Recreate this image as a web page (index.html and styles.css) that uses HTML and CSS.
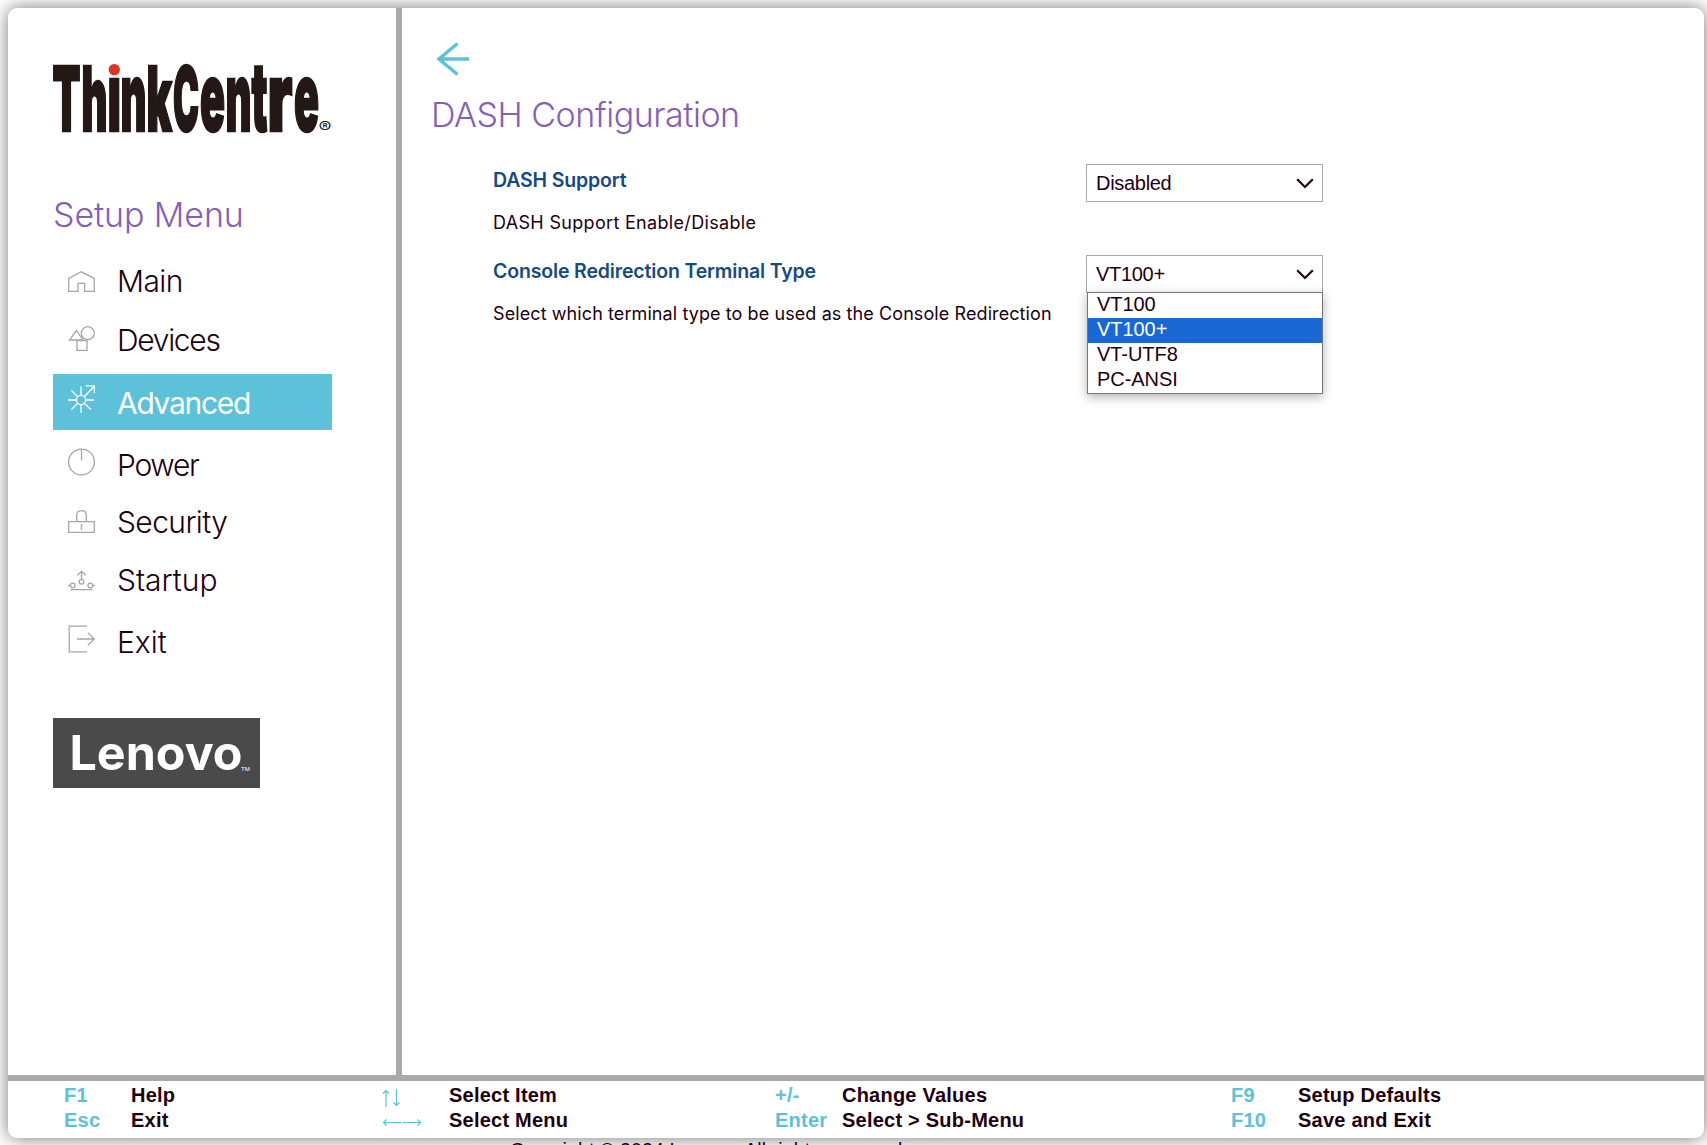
FILE: index.html
```html
<!DOCTYPE html>
<html lang="en">
<head>
<meta charset="utf-8">
<title>ThinkCentre Setup</title>
<link rel="stylesheet" href="styles.css">
</head>
<body>
<div class="panel">
  <div class="upper">
    <aside class="sidebar">
      <svg class="brand" width="280" height="70" viewBox="0 0 280 70">
        <text class="brand-text" y="67"><tspan x="-.5" textLength="28" lengthAdjust="spacingAndGlyphs">T</tspan><tspan x="28.500" textLength="26" lengthAdjust="spacingAndGlyphs">h</tspan><tspan class="low" x="54.500" textLength="13.500" lengthAdjust="spacingAndGlyphs">i</tspan><tspan class="low" x="67.500" textLength="26" lengthAdjust="spacingAndGlyphs">n</tspan><tspan x="93.500" textLength="25.500" lengthAdjust="spacingAndGlyphs">k</tspan><tspan x="120" textLength="26" lengthAdjust="spacingAndGlyphs">C</tspan><tspan class="low" x="147" textLength="25" lengthAdjust="spacingAndGlyphs">e</tspan><tspan class="low" x="172.500" textLength="26" lengthAdjust="spacingAndGlyphs">n</tspan><tspan class="low" x="198.500" textLength="16" lengthAdjust="spacingAndGlyphs">t</tspan><tspan class="low" x="214.500" textLength="25" lengthAdjust="spacingAndGlyphs">r</tspan><tspan class="low" x="241" textLength="25" lengthAdjust="spacingAndGlyphs">e</tspan></text>
        <rect x="54.500" y="-14" width="13" height="27" fill="#fff"/>
        <circle cx="61.3" cy="5.6" r="5.7" fill="#da3527"/>
        <text class="reg" x="265.5" y="69" textLength="13" lengthAdjust="spacingAndGlyphs">®</text>
      </svg>
      <h2 class="menu-title">Setup Menu</h2>
      <ul class="menu">
        <li class="item"><svg width="28" height="21" viewBox="0 0 28 21"><path d="M.7 20.3V7.5L13.3.8 26.3 7.5v12.8h-9.6v-8H10v8z"/></svg><span class="label snug">Main</span></li>
        <li class="item"><svg width="28" height="25" viewBox="0 0 28 25"><path d="M8.5 4.5 1.5 14H15zM9 14.7h10v9.6H9z"/><circle cx="19.8" cy="7.2" r="6.5"/></svg><span class="label tight">Devices</span></li>
        <li class="item active"><svg width="28" height="28" viewBox="0 0 28 28"><circle cx="13" cy="15" r="4.6"/><path d="M13 1.5v9M13 19.6V28M0 15h8.4M17.6 15H26M3.5 5.5l6.2 6.2M16.3 11.7 26 1.5M3.5 24.5l6.2-6.2M16.3 18.3l6.5 6.2M17.5.8h8.8v7.5"/></svg><span class="label tight">Advanced</span></li>
        <li class="item"><svg width="28" height="28" viewBox="0 0 28 28"><circle cx="13.5" cy="14" r="12.9"/><path d="M13.5 1v11.5"/></svg><span class="label tight">Power</span></li>
        <li class="item"><svg width="28" height="23" viewBox="0 0 28 23"><path d="M.7 11.7h25.6v10.6H.7zM8.7 11.7V5.5Q8.7.7 13.5.7t4.8 4.8v6.2M13.5 14v6"/></svg><span class="label snug">Security</span></li>
        <li class="item"><svg width="28" height="24" viewBox="0 0 28 24"><path d="M2.5 22.6h22M13.5 12.3V4.5M9.3 8.3l4.2-4 4.2 4M0 18.5h2.2M24.8 18.5H27"/><circle cx="13.5" cy="14.7" r="2.3"/><circle cx="4.7" cy="18.5" r="2.3"/><circle cx="22.3" cy="18.5" r="2.3"/></svg><span class="label">Startup</span></li>
        <li class="item"><svg width="28" height="28" viewBox="0 0 28 28"><path d="M19 1.2H1.2v25.6H19M9 14h17M19.8 7.6l6.5 6.4-6.5 6.4"/></svg><span class="label">Exit</span></li>
      </ul>
      <svg class="lenovo" width="207" height="70" viewBox="0 0 207 70">
        <rect width="207" height="70" fill="#4a4a4a"/>
        <text class="lenovo-text" x="16.500" y="52" textLength="173" lengthAdjust="spacingAndGlyphs">Lenovo</text>
        <text class="tm" x="188" y="53" textLength="9" lengthAdjust="spacingAndGlyphs">TM</text>
      </svg>
    </aside>
    <main class="content">
      <svg class="back" width="34" height="34" viewBox="0 0 34 34"><path d="M2.5 17H33M21.5 1.5 3 17l18.500 15.500"/></svg>
      <h1 class="title">DASH Configuration</h1>
      <div class="options">
        <section class="option">
          <div><h3 class="name">DASH Support</h3><p class="desc wide">DASH Support Enable/Disable</p></div>
          <div class="select"><span>Disabled</span><svg width="18" height="11" viewBox="0 0 18 11"><path d="M1.200 1.200 9 9l7.800-7.800"/></svg></div>
        </section>
        <section class="option">
          <div><h3 class="name">Console Redirection Terminal Type</h3><p class="desc">Select which terminal type to be used as the Console Redirection</p></div>
          <div class="select"><span>VT100+</span><svg width="18" height="11" viewBox="0 0 18 11"><path d="M1.200 1.200 9 9l7.800-7.800"/></svg>
            <ul class="list"><li>VT100</li><li class="chosen">VT100+</li><li>VT-UTF8</li><li>PC-ANSI</li></ul>
          </div>
        </section>
      </div>
    </main>
  </div>
  <footer class="keys">
    <dl><dt>F1</dt><dd>Help</dd><dt>Esc</dt><dd>Exit</dd></dl>
    <dl><dt><svg width="20" height="18" viewBox="0 0 20 18"><path d="M4 18V1.500M1 4.500l3-3 3 3M14.500 0v16.500M11.500 13.500l3 3 3-3"/></svg></dt><dd>Select Item</dd><dt><svg class="across" width="40" height="9" viewBox="0 0 40 9"><path d="M19 4.500H1.500M4.500 1.500l-3 3 3 3M21 4.500h17.500M35.500 1.500l3 3-3 3"/></svg></dt><dd>Select Menu</dd></dl>
    <dl><dt>+/-</dt><dd>Change Values</dd><dt>Enter</dt><dd>Select &gt; Sub-Menu</dd></dl>
    <dl><dt>F9</dt><dd>Setup Defaults</dd><dt>F10</dt><dd>Save and Exit</dd></dl>
  </footer>
</div>
<p class="copyright">Copyright © 2024 Lenovo. All rights reserved.</p>
</body>
</html>
```
FILE: styles.css
```css
* { box-sizing: border-box; }
html, body { height: 100%; overflow: hidden; }
body {
  margin: 0;
  background: #fff;
  color: #1c0010;
  font-family: Inter, "Noto Sans", sans-serif;
}
h1, h2, h3, p, ul, dl, dd { margin: 0; padding: 0; }
ul { list-style: none; }

.panel {
  display: flex;
  flex-direction: column;
  width: 1696px;
  height: 1130px;
  margin: 8px 0 0 8px;
  background: #fff;
  border-radius: 9px;
  box-shadow: 0 0 18px rgba(0, 0, 0, .55);
}
.upper { display: flex; flex: 1; }

.sidebar {
  width: 394px;
  padding: 56px 0 0 45px;
  border-right: 6px solid #a9a9a9;
}
.brand { display: block; overflow: visible; }
.brand-text {
  font-size: 90px;
  font-weight: 900;
  fill: #231815;
  stroke: #231815;
  stroke-width: 2.5;
}
.low { font-size: 96px; }
.reg { font-size: 16px; fill: #231815; }
.menu-title {
  margin-top: 61px;
  color: #8460b8;
  font-size: 34px;
  font-weight: 350;
  line-height: 40px;
  letter-spacing: -.1px;
}
.menu {
  display: flex;
  flex-direction: column;
  gap: 6px;
  margin-top: 25px;
}
.item {
  display: flex;
  align-items: baseline;
  gap: 21px;
  width: 279px;
  padding: 11px 0 17px 15px;
}
.item svg {
  fill: none;
  stroke: #a6a6a6;
  stroke-width: 1.3;
}
.label { font-size: 30px; font-weight: 350; line-height: 21px; }
.snug { letter-spacing: -.6px; }
.tight { letter-spacing: -1.3px; }
.active { margin-bottom: 1px; background: #5ec1da; color: #fff; }
.active .label { font-weight: 400; transform: translateY(1px); }
.active svg { stroke: #fff; }
.lenovo { display: block; margin-top: 48px; }
.lenovo-text { font-size: 48px; font-weight: 750; fill: #fff; }
.tm { font: 5.500px "Liberation Sans", sans-serif; fill: #fff; }

.content { flex: 1; padding: 34px 0 0 29px; }
.back { display: block; margin-left: 5px; fill: none; stroke: #5ec1da; stroke-width: 3.500; }
.title {
  margin-top: 19px;
  color: #8460b8;
  font-size: 34px;
  font-weight: 300;
  line-height: 40px;
  letter-spacing: -.45px;
}
.options { width: 892px; margin-top: 29px; padding-left: 62px; }
.option { display: flex; justify-content: space-between; height: 91px; }
.name { color: #164a82; font-size: 19.500px; font-weight: 600; line-height: 32px; letter-spacing: -.15px; }
.desc { margin-top: 12px; font-size: 18px; line-height: 30px; letter-spacing: .09px; white-space: nowrap; }
.wide { letter-spacing: .32px; }
.select {
  position: relative;
  display: flex;
  align-items: center;
  justify-content: space-between;
  width: 237px;
  height: 38px;
  padding: 0 8px 0 9px;
  border: 1px solid #a9a9a9;
  font: 20px "Liberation Sans", Arial, sans-serif;
  letter-spacing: -.3px;
}
.select svg { fill: none; stroke: #1c0010; stroke-width: 2.200; }
.list {
  position: absolute;
  top: 36px;
  left: 0;
  width: 236px;
  background: #fff;
  border: 1px solid #767676;
  box-shadow: 0 3px 10px rgba(0, 0, 0, .3);
  letter-spacing: -.05px;
}
.list li { height: 25px; padding-left: 9px; line-height: 23px; }
.chosen { background: #1967d2; color: #fff; }

.keys {
  display: grid;
  grid-template-columns: 318px 393px 456px 1fr;
  height: 63px;
  padding: 2px 0 0 56px;
  border-top: 6px solid #a9a9a9;
  font: bold 20px "Liberation Sans", Arial, sans-serif;
  letter-spacing: .23px;
}
.keys dl { display: grid; grid-template-columns: 67px auto; grid-auto-rows: 25px; line-height: 25px; }
.keys dt { color: #5ec1da; }
.keys svg { display: block; margin-top: 6px; fill: none; stroke: #5ec1da; stroke-width: 1.200; }
.keys .across { margin-top: 10px; }
.copyright {
  padding-left: 510px;
  font: 19.500px/24px "Liberation Sans", Arial, sans-serif;
  letter-spacing: .12px;
}
```
